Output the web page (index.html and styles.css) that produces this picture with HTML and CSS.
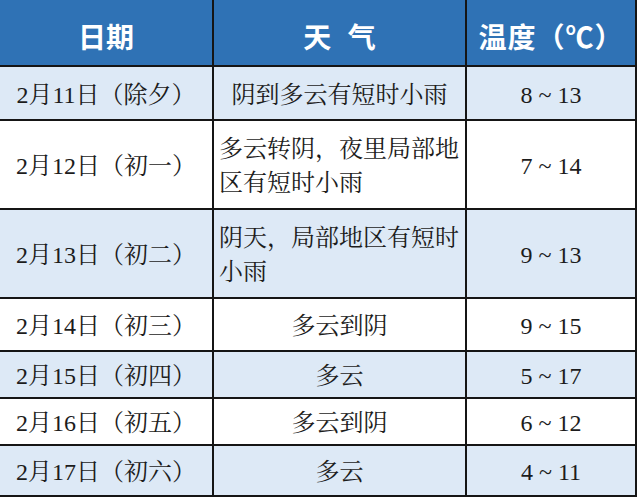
FILE: index.html
```html
<!DOCTYPE html>
<html lang="zh-CN">
<head>
<meta charset="utf-8">
<title>天气预报</title>
<link rel="stylesheet" href="styles.css">
</head>
<body>
<div class="table">
  <div class="cell head">日期</div>
  <div class="cell head head-weather">天 气</div>
  <div class="cell head head-temp">温度（℃）</div>

  <div class="cell alt">2月11日（除夕）</div>
  <div class="cell alt">阴到多云有短时小雨</div>
  <div class="cell alt num">8 ~ 13</div>

  <div class="cell">2月12日（初一）</div>
  <div class="cell multi">多云转阴，夜里局部地<br>区有短时小雨</div>
  <div class="cell num">7 ~ 14</div>

  <div class="cell alt">2月13日（初二）</div>
  <div class="cell alt multi">阴天，局部地区有短时<br>小雨</div>
  <div class="cell alt num">9 ~ 13</div>

  <div class="cell">2月14日（初三）</div>
  <div class="cell">多云到阴</div>
  <div class="cell num">9 ~ 15</div>

  <div class="cell alt">2月15日（初四）</div>
  <div class="cell alt">多云</div>
  <div class="cell alt num">5 ~ 17</div>

  <div class="cell">2月16日（初五）</div>
  <div class="cell">多云到阴</div>
  <div class="cell num">6 ~ 12</div>

  <div class="cell alt">2月17日（初六）</div>
  <div class="cell alt">多云</div>
  <div class="cell alt num">4 ~ 11</div>
</div>
</body>
</html>
```

FILE: styles.css
```css
html, body {
  margin: 0;
  padding: 0;
  background: #ffffff;
}

body {
  overflow: hidden;
}

.table {
  display: grid;
  grid-template-columns: 212px 251px 168px;
  grid-template-rows: 65px 52px 87px 87px 51px 45px 45px 49px;
  gap: 2px;
  padding: 2px;
  background: #151515;
  width: max-content;
  margin: -2px 0 0 -2px;
  font-family: "Liberation Serif", "Noto Serif CJK SC", "Noto Sans CJK SC", serif;
  font-size: 24px;
  color: #1c1c1c;
}

.cell {
  background: #ffffff;
  display: flex;
  align-items: center;
  justify-content: center;
  text-align: center;
  padding-top: 3px;
  box-sizing: border-box;
  line-height: 34px;
  white-space: nowrap;
}

.cell.alt {
  background: #dde9f6;
}

.cell.head {
  background: #2f72b5;
  color: #ffffff;
  font-family: "Noto Sans CJK SC", sans-serif;
  font-weight: 700;
  font-size: 28px;
  padding-top: 6px;
}

.head-weather {
  word-spacing: 10px;
}

.head-temp {
  letter-spacing: 1px;
}

.cell.multi {
  justify-content: flex-start;
  text-align: left;
  padding: 3px 4px 0 5px;
}

.cell.num {
  font-size: 24px;
}
```
